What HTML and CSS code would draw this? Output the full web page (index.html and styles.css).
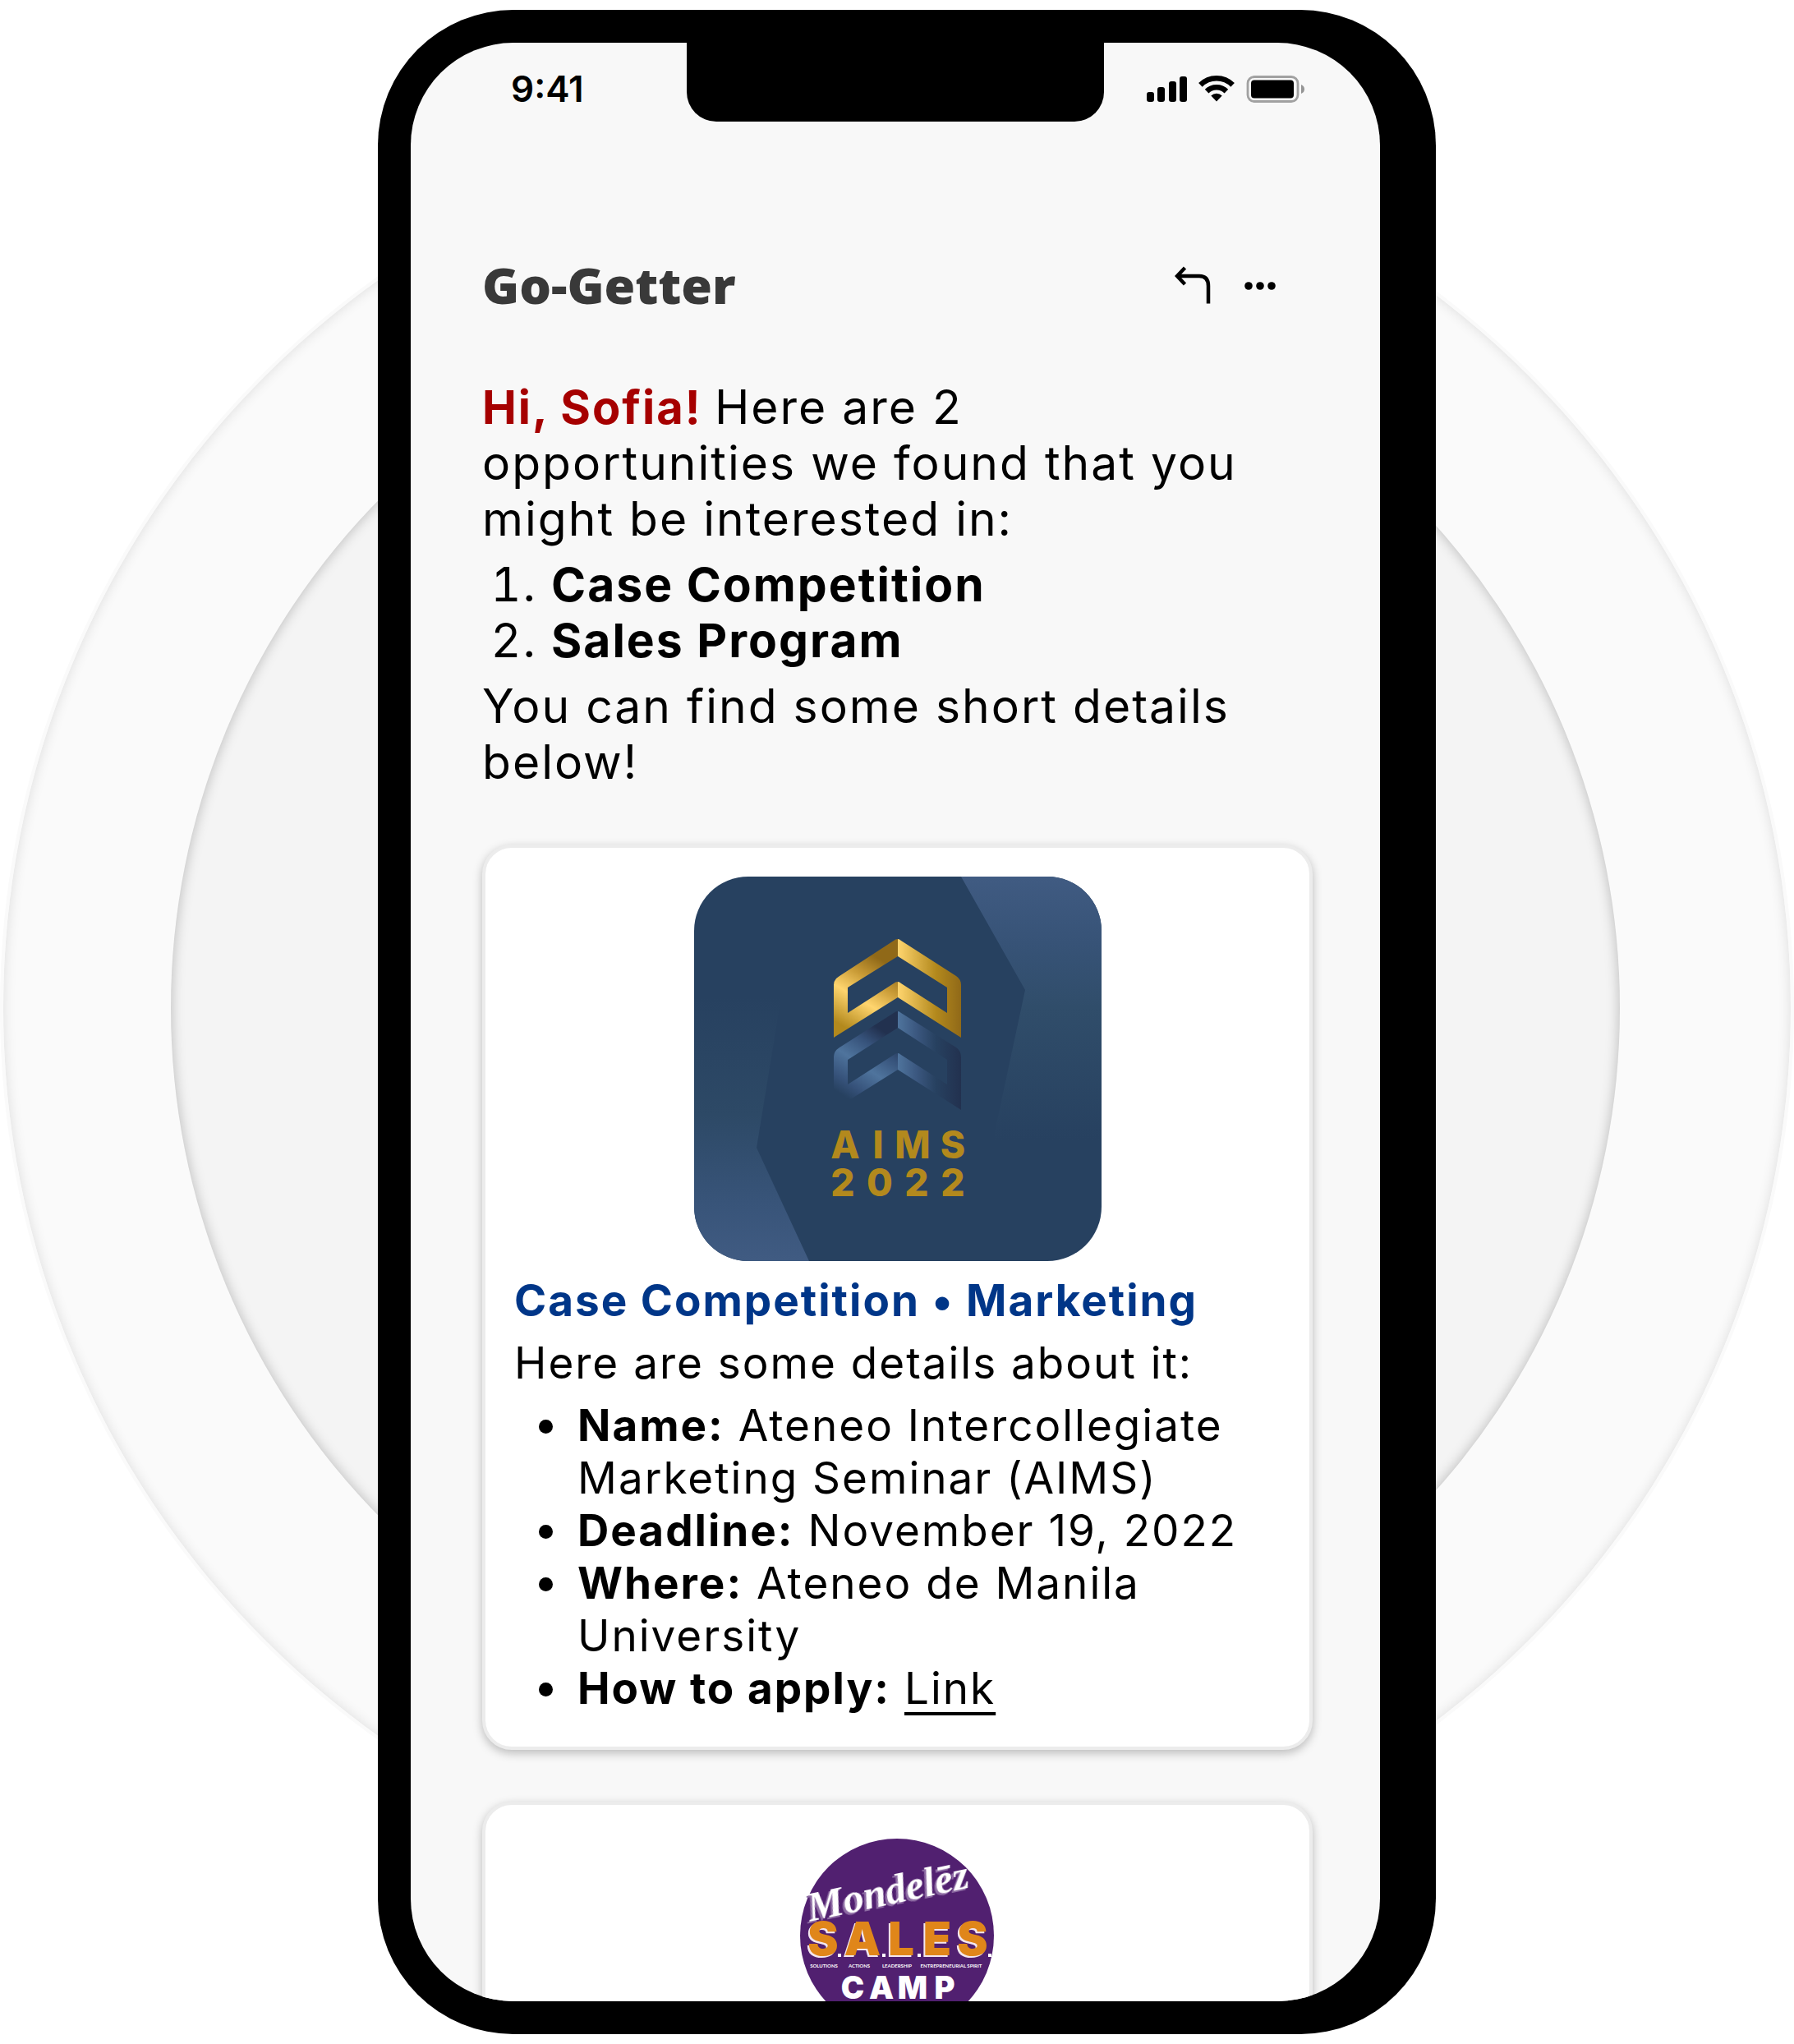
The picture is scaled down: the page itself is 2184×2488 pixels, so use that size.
FILE: index.html
```html
<!DOCTYPE html>
<html lang="en">
<head>
<meta charset="utf-8">
<meta name="viewport" content="width=device-width, initial-scale=1">
<title>Go-Getter</title>
<link rel="stylesheet" href="styles.css">
</head>
<body>
<main class="stage">
  <div class="halo halo-outer"></div>
  <div class="halo halo-inner"></div>
  <div class="phone">
    <div class="notch"></div>
    <div class="screen">
      <div class="status">
        <span class="time">9:41</span>
        <svg class="status-icons" width="193" height="36" viewBox="0 0 193 36" aria-hidden="true">
          <rect x="0" y="22" width="9" height="12" rx="3"/>
          <rect x="13" y="16" width="9" height="18" rx="3"/>
          <rect x="27" y="9" width="9" height="25" rx="3"/>
          <rect x="40" y="3" width="9" height="31" rx="3"/>
          <g fill="none" stroke="#000" stroke-width="6.500">
            <path d="M65.400 13.400A27.700 27.700 0 0 1 104.600 13.400"/>
            <path d="M73.100 21.100A16.800 16.800 0 0 1 96.900 21.100"/>
          </g>
          <path d="M78.300 26.500A9.500 9.500 0 0 1 91.700 26.500L85 33.500Z"/>
          <rect x="123" y="3.500" width="61" height="30" rx="8" fill="none" stroke="#000" stroke-opacity=".35" stroke-width="2.800"/>
          <rect x="127" y="7.500" width="52" height="22" rx="4"/>
          <path d="M188 13q4 1.500 4 5.500t-4 5.500z" fill-opacity=".4"/>
        </svg>
      </div>
      <header class="topbar">
        <h1 class="brand">Go-Getter</h1>
        <div class="actions">
          <button class="icon-button" type="button" aria-label="Reply">
            <svg width="44" height="46" viewBox="0 0 44 46" fill="none" stroke="#000" stroke-width="4.500"><path d="M12.500 2L3 12l9.500 10M3 12h27q11 0 11 12v21.500"/></svg>
          </button>
          <button class="icon-button" type="button" aria-label="More">
            <svg width="40" height="46" viewBox="0 0 40 46"><circle cx="6" cy="24" r="4.800"/><circle cx="20" cy="24" r="4.800"/><circle cx="34" cy="24" r="4.800"/></svg>
          </button>
        </div>
      </header>
      <section class="intro">
        <p><strong class="greeting">Hi, Sofia! </strong>Here are 2 opportunities we found that you might be interested in:</p>
        <ol class="picks">
          <li><strong>Case Competition</strong></li>
          <li><strong>Sales Program</strong></li>
        </ol>
        <p>You can find some short details below!</p>
      </section>
      <article class="card">
        <svg class="poster" width="496" height="468" viewBox="0 0 496 468" role="img" aria-label="AIMS 2022">
          <defs>
            <linearGradient id="sideTop" x1="0" y1="0" x2="0" y2="1"><stop offset="0" stop-color="#405b82"/><stop offset=".25" stop-color="#375377"/><stop offset=".5" stop-color="#304d6a"/><stop offset="1" stop-color="#274160"/></linearGradient>
            <linearGradient id="sideBottom" x1="0" y1="1" x2="0" y2="0"><stop offset="0" stop-color="#405b82"/><stop offset=".2" stop-color="#385479"/><stop offset=".5" stop-color="#2d4966"/><stop offset=".9" stop-color="#274160"/></linearGradient>
            <linearGradient id="goldLeft" gradientUnits="userSpaceOnUse" x1="188" y1="186" x2="244" y2="92"><stop offset="0" stop-color="#b3891d"/><stop offset=".35" stop-color="#ffd56e"/><stop offset=".6" stop-color="#c99b36"/><stop offset=".85" stop-color="#906918"/></linearGradient>
            <linearGradient id="goldRight" x1="0" y1="0" x2="1" y2="0"><stop offset="0" stop-color="#ffd56e"/><stop offset=".6" stop-color="#b3891d"/><stop offset="1" stop-color="#906918"/></linearGradient>
            <linearGradient id="blueLeft" gradientUnits="userSpaceOnUse" x1="184" y1="268" x2="244" y2="178"><stop offset="0" stop-color="#274160"/><stop offset=".15" stop-color="#36527a"/><stop offset=".4" stop-color="#4f749d"/><stop offset=".65" stop-color="#36527a"/><stop offset=".85" stop-color="#22314f"/></linearGradient>
            <linearGradient id="blueRight" x1="0" y1="0" x2="1" y2="0"><stop offset="0" stop-color="#4f749d"/><stop offset=".3" stop-color="#3b577f"/><stop offset=".6" stop-color="#274160"/><stop offset="1" stop-color="#22314f"/></linearGradient>
          </defs>
          <rect width="496" height="468" fill="#274160"/>
          <path d="M325 0H496V320H364L403 138Z" fill="url(#sideTop)"/>
          <path d="M0 110H112L76 330L140 468H0Z" fill="url(#sideBottom)"/>
          <path fill="url(#goldLeft)" d="M248 76Q245 76 243 78L177 121Q170 125 170 132V196L248 147V128Q245 128 243 130L187 166V135L248 97Z"/>
          <path fill="url(#goldRight)" d="M248 76Q250 76 252 78L319 121Q325 125 325 132V196L248 147V128Q250 128 252 130L308 166V135L248 97Z"/>
          <path fill="url(#blueLeft)" d="M248 164Q245 164 243 166L177 208Q170 212 170 220V284L248 235V215Q245 215 243 217L187 253V223L248 184Z"/>
          <path fill="url(#blueRight)" d="M248 164Q250 164 252 166L319 208Q325 212 325 220V284L248 235V215Q250 215 252 217L308 253V223L248 184Z"/>
          <g class="poster-text">
            <text x="184 224 266 315" y="343">AIMS</text>
            <text x="181 226 271 315" y="389">2022</text>
          </g>
        </svg>
        <h2 class="card-title">Case Competition • Marketing</h2>
        <p>Here are some details about it:</p>
        <ul class="facts">
          <li><strong>Name:</strong> Ateneo Intercollegiate Marketing Seminar (AIMS)</li>
          <li><strong>Deadline:</strong> November 19, 2022</li>
          <li><strong>Where:</strong> Ateneo de Manila University</li>
          <li><strong>How to apply:</strong> <a class="link" href="#apply">Link</a></li>
        </ul>
      </article>
      <article class="card">
        <svg class="badge" width="238" height="238" viewBox="0 0 238 238" role="img" aria-label="Mondelez S.A.L.E.S. Camp">
          <circle cx="118" cy="118" r="118" fill="#512070"/>
          <text class="script" x="110" y="80" transform="rotate(-12 110 80)">Mondelēz</text>
          <text class="sales" x="28 76 123 167 210" y="142">SALES</text>
          <path fill="#fff" d="M46 140h4v4h-4zM100 140h4v4h-4zM143 140h4v4h-4zM229 140h4v4h-4z"/>
          <g class="tiny"><text x="29" y="157">SOLUTIONS</text><text x="72" y="157">ACTIONS</text><text x="118" y="157">LEADERSHIP</text><text x="184" y="157">ENTREPRENEURIAL SPIRIT</text></g>
          <text class="camp" x="64 99 137 176" y="195">CAMP</text>
        </svg>
      </article>
    </div>
  </div>
</main>
</body>
</html>
```
FILE: styles.css
```css
* { box-sizing: border-box; }

body {
  margin: 0;
  background: #fff;
  color: #000;
  font-family: Inter, "Liberation Sans", sans-serif;
}

h1, h2, p, ol, ul { margin: 0; }

.stage {
  position: relative;
  display: flex;
  justify-content: center;
  height: 100vh;
  padding: 12px 0;
  overflow: hidden;
}

/* concentric discs behind the phone */
.halo {
  position: absolute;
  top: 1227px;
  left: 50%;
  aspect-ratio: 1;
  border-radius: 50%;
  transform: translate(-50%, -50%);
}

.halo-outer {
  width: 100%;
  border: 4px solid #fafafa;
  background: #fafafa;
  box-shadow: inset 0 0 16px rgba(0, 0, 0, .12);
}

.halo-inner {
  width: 1764px;
  margin-left: -2px;
  background: #f4f4f4;
  box-shadow: inset 0 0 16px rgba(0, 0, 0, .25);
}

.phone {
  position: relative;
  width: 1288px;
  max-width: 100%;
  margin-left: 24px;
  padding: 40px 68px 40px 40px;
  border-radius: 165px;
  background: #000;
}

.notch {
  position: absolute;
  top: 40px;
  left: 376px;
  width: 508px;
  height: 96px;
  border-radius: 0 0 36px 36px;
  background: #000;
}

.screen {
  height: 100%;
  padding: 0 82px 0 87px;
  overflow: hidden;
  border-radius: 125px;
  background: #f8f8f8;
}

.status {
  display: flex;
  align-items: center;
  justify-content: space-between;
  height: 112px;
  padding: 0 9px 0 35px;
}

.time {
  font-size: 44px;
  font-weight: 600;
  line-height: 52px;
}

.topbar {
  display: flex;
  align-items: center;
  justify-content: space-between;
  height: 80px;
  margin-top: 143px;
  padding-right: 44px;
}

.brand {
  color: #393939;
  font: 900 61px/76px "Noto Sans", "Open Sans", sans-serif;
}

.actions {
  display: flex;
  gap: 40px;
}

.icon-button {
  display: flex;
  padding: 0;
  border: 0;
  background: none;
}

.intro {
  display: grid;
  gap: 12px;
  margin: 75px 0 66px;
  padding-right: 66px;
  font-size: 57px;
  line-height: 68px;
  letter-spacing: 2px;
}

.greeting {
  color: #a60000;
  font-size: 56px;
}

.picks { padding-left: 84px; }

.card {
  margin-bottom: 63px;
  padding: 35px 35px 39px;
  border: 4px solid #ececec;
  border-radius: 36px;
  background: #fff;
  background-clip: padding-box;
  box-shadow: 0 4px 12px rgba(0, 0, 0, .25);
  font-size: 53px;
  line-height: 64px;
  letter-spacing: 2px;
}

.poster {
  display: block;
  margin: 0 auto 16px;
  border-radius: 66px;
}

.poster-text {
  fill: #b3891d;
  font: 800 46px Inter, sans-serif;
  letter-spacing: 0;
  text-anchor: middle;
}

.card-title {
  margin-bottom: 12px;
  color: #003688;
  font: inherit;
  font-weight: 700;
}

.facts {
  margin-top: 12px;
  padding-left: 71px;
}

.facts li { padding-left: 6px; }

.link {
  color: inherit;
  text-decoration-thickness: 4px;
  text-underline-offset: 10px;
}

.badge {
  display: block;
  margin: 6px auto 16px;
  letter-spacing: 0;
}

.badge text { text-anchor: middle; }

.script {
  fill: #fff;
  font: italic 700 50px "Liberation Serif", serif;
  filter: drop-shadow(-3px 2px 0 #8d6ba3);
}

.sales {
  fill: #e0861a;
  font: 900 56px Inter, sans-serif;
  filter: drop-shadow(-2px 2px 0 #f3e6ee);
}

.tiny text {
  fill: #fff;
  font: 700 6px Lato, sans-serif;
}

.camp {
  fill: #fff;
  font: 900 38px Inter, sans-serif;
}
```
